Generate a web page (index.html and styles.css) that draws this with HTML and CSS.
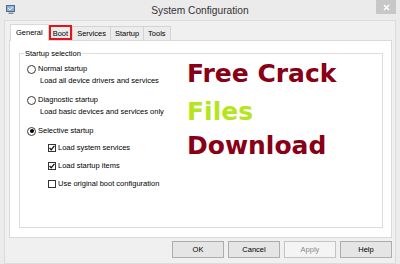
FILE: index.html
```html
<!DOCTYPE html>
<html lang="en">
<head>
  <meta charset="UTF-8" />
  <meta name="viewport" content="width=device-width, initial-scale=1.0"/>
  <title>System Configuration</title>
  <link rel="stylesheet" href="styles.css">
</head>
<body>

  <div class="window">
    <div class="titlebar">
      <span class="app-icon">
        <svg width="10" height="10" viewBox="0 0 10 10">
          <rect x="0.5" y="0.5" width="8" height="6" fill="#8db3dd" stroke="#566b8c"/>
          <path d="M2.2 3.2l1.6 1.6 2.8-2.8" stroke="#fff" stroke-width="1" fill="none"/>
          <rect x="2.5" y="7.5" width="5" height="1.5" fill="#8c8c8c"/>
        </svg>
      </span>
      <span class="title">System Configuration</span>
      <span class="close">
        <svg width="7" height="7" viewBox="0 0 7 7">
          <path d="M1 1l5 5M6 1l-5 5" stroke="#fff" stroke-width="1.5"/>
        </svg>
      </span>
    </div>

    <div class="client">
      <div class="tabs">
        <div class="tab active">General</div>
        <div class="tab marked">Boot</div>
        <div class="tab">Services</div>
        <div class="tab">Startup</div>
        <div class="tab">Tools</div>
      </div>

      <div class="panel">
        <div class="group">
          <span class="legend">Startup selection</span>
          <div class="group-body">
            <div class="options">
              <div class="radio"><span class="dot"></span>Normal startup</div>
              <p class="hint">Load all device drivers and services</p>

              <div class="radio"><span class="dot"></span>Diagnostic startup</div>
              <p class="hint">Load basic devices and services only</p>

              <div class="radio"><span class="dot on"></span>Selective startup</div>

              <div class="checks">
                <div class="check">
                  <span class="box">
                    <svg width="6" height="6" viewBox="0 0 6 6"><path d="M0.6 3l1.6 1.8L5.4 0.8" stroke="#111" stroke-width="1.3" fill="none"/></svg>
                  </span>
                  Load system services
                </div>
                <div class="check">
                  <span class="box">
                    <svg width="6" height="6" viewBox="0 0 6 6"><path d="M0.6 3l1.6 1.8L5.4 0.8" stroke="#111" stroke-width="1.3" fill="none"/></svg>
                  </span>
                  Load startup items
                </div>
                <div class="check">
                  <span class="box"></span>
                  Use original boot configuration
                </div>
              </div>
            </div>

            <div class="promo">
              <div class="promo-line red">Free Crack</div>
              <div class="promo-line green files">Files</div>
              <div class="promo-line red download">Download</div>
            </div>
          </div>
        </div>
      </div>

      <div class="buttons">
        <button type="button">OK</button>
        <button type="button">Cancel</button>
        <button type="button" disabled>Apply</button>
        <button type="button">Help</button>
      </div>
    </div>
  </div>

</body>
</html>
```

FILE: styles.css
```css
:root {
  --frame: #ebebeb;
  --client: #f0f0f0;
  --line: #d9d9d9;
  --red: #880015;
  --green: #b5e61d;
}

* {
  box-sizing: border-box;
  margin: 0;
  padding: 0;
}

body {
  width: 400px;
  height: 264px;
  overflow: hidden;
  background-color: var(--frame);
  font-family: "Liberation Sans", Arial, sans-serif;
  font-size: 7.5px;
  color: #000;
}

.titlebar {
  height: 20px;
  display: grid;
  grid-template-columns: 1fr auto 1fr;
  align-items: start;
}

.app-icon {
  padding: 5px 0 0 6px;
  display: flex;
}

.title {
  font-size: 10.2px;
  line-height: 21px;
  color: #333;
}

.close {
  justify-self: end;
  width: 20px;
  height: 14px;
  margin-right: 4px;
  background-color: #c7c7c7;
  display: flex;
  align-items: center;
  justify-content: center;
}

.client {
  margin: 0 4px;
  height: 244px;
  border: 1px solid #dcdcdc;
  background-color: var(--client);
  padding: 3px 3px 0 4px;
}

/* tabs */
.tabs {
  display: flex;
  align-items: flex-end;
  height: 16px;
  padding-left: 1px;
  position: relative;
  z-index: 1;
}

.tab {
  position: relative;
  height: 14px;
  line-height: 13px;
  padding: 0 4px;
  margin-left: -1px;
  border: 1px solid #d3d3d3;
  border-bottom: none;
  background-color: #ececec;
}

.tab.active {
  height: 17px;
  line-height: 16px;
  margin-left: 0;
  margin-bottom: -1px;
  padding: 0 5px;
  background-color: #fff;
  border-color: var(--line);
}

.tab.marked::after {
  content: "";
  position: absolute;
  left: 0;
  right: 0;
  top: -2px;
  bottom: 0;
  border: 2px solid #e3141b;
}

/* panel */
.panel {
  height: 198px;
  background-color: #fff;
  border: 1px solid var(--line);
  padding: 12px 8px 0 9px;
}

.group {
  height: 175px;
  border: 1px solid #dcdcdc;
}

.legend {
  display: block;
  width: fit-content;
  margin: -6px 0 0 4px;
  padding: 0 1px;
  line-height: 11px;
  background-color: #fff;
}

.group-body {
  display: flex;
  padding-top: 4px;
}

.options {
  width: 167px;
  padding-left: 7px;
}

.radio, .check {
  display: flex;
  align-items: center;
  gap: 2px;
  height: 12px;
  line-height: 12px;
  white-space: nowrap;
}

.dot {
  width: 9px;
  height: 9px;
  border: 1px solid #3a3a3a;
  border-radius: 50%;
  background-color: #fff;
  display: flex;
  align-items: center;
  justify-content: center;
}

.dot.on::after {
  content: "";
  width: 4px;
  height: 4px;
  border-radius: 50%;
  background-color: #000;
}

.hint {
  margin-left: 13px;
  line-height: 12px;
  white-space: nowrap;
}

.hint + .radio {
  margin-top: 7px;
}

.checks {
  margin-top: 5px;
  padding-left: 21px;
  display: flex;
  flex-direction: column;
  gap: 6px;
}

.box {
  width: 8px;
  height: 8px;
  border: 1px solid #333;
  background-color: #fff;
  display: flex;
  align-items: center;
  justify-content: center;
}

/* overlay text */
.promo {
  margin-top: -2px;
  font-family: "DejaVu Sans", Verdana, sans-serif;
  font-weight: bold;
  font-size: 25px;
  line-height: 25px;
  white-space: nowrap;
}

.promo-line.red {
  color: var(--red);
}

.promo-line.green {
  color: var(--green);
}

.files {
  margin-top: 13px;
}

.download {
  margin-top: 9px;
}

/* buttons */
.buttons {
  display: flex;
  justify-content: flex-end;
  gap: 4px;
  margin-top: 3px;
}

.buttons button {
  width: 52px;
  height: 17px;
  border: 1px solid #adadad;
  background-color: #e5e5e5;
  font: inherit;
  color: #000;
}

.buttons button:disabled {
  border-color: #c4c4c4;
  background-color: #f4f4f4;
  color: #8a8a8a;
}
```
